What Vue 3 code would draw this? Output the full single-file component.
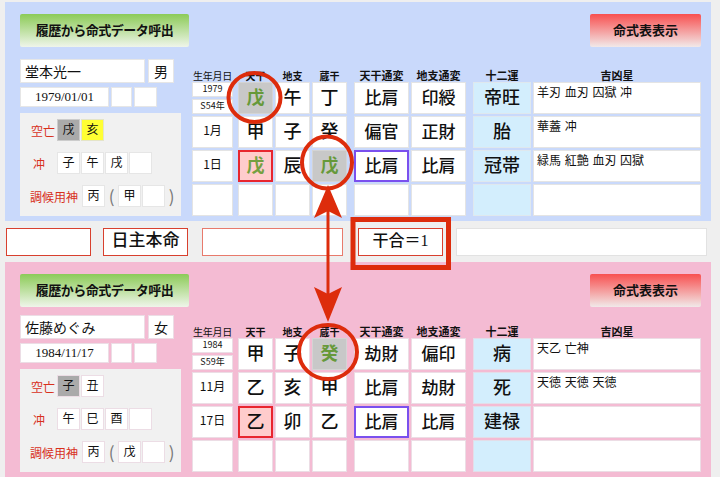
<script setup>
// cell helper: text plus optional highlight class
const c = (t, cls = '') => ({ t, cls })
const blank = c('')

const charts = [
  {
    theme: 'blue',
    name: '堂本光一',
    sex: '男',
    birth: '1979/01/01',
    kubo: [c('戌', 'grey'), c('亥', 'yellow')],
    chu: ['子', '午', '戌', ''],
    choko: ['丙', '甲', ''],
    year: '1979',
    era: 'S54年',
    month: '1月',
    day: '1日',
    stems: [
      { title: '天干', cells: [c('戊', 'hit'), c('甲'), c('戊', 'day green'), blank] },
      { title: '地支', cells: [c('午'), c('子'), c('辰'), blank] },
      { title: '蔵干', cells: [c('丁'), c('癸'), c('戊', 'hit'), blank] }
    ],
    tsuhen: [
      { title: '天干通変', cells: [c('比肩'), c('偏官'), c('比肩', 'purple'), blank] },
      { title: '地支通変', cells: [c('印綬'), c('正財'), c('比肩'), blank] }
    ],
    unsei: ['帝旺', '胎', '冠帯', ''],
    stars: ['羊刃 血刃 囚獄 冲', '華蓋 冲', '緑馬 紅艶 血刃 囚獄', '']
  },
  {
    theme: 'pink',
    name: '佐藤めぐみ',
    sex: '女',
    birth: '1984/11/17',
    kubo: [c('子', 'grey'), c('丑')],
    chu: ['午', '巳', '酉', ''],
    choko: ['丙', '戊', ''],
    year: '1984',
    era: 'S59年',
    month: '11月',
    day: '17日',
    stems: [
      { title: '天干', cells: [c('甲'), c('乙'), c('乙', 'day'), blank] },
      { title: '地支', cells: [c('子'), c('亥'), c('卯'), blank] },
      { title: '蔵干', cells: [c('癸', 'hit'), c('甲'), c('乙'), blank] }
    ],
    tsuhen: [
      { title: '天干通変', cells: [c('劫財'), c('比肩'), c('比肩', 'purple'), blank] },
      { title: '地支通変', cells: [c('偏印'), c('劫財'), c('比肩'), blank] }
    ],
    unsei: ['病', '死', '建禄', ''],
    stars: ['天乙 亡神', '天徳 天徳 天徳', '', '']
  }
]
</script>

<template>
  <div class="page">
    <template v-for="(chart, i) in charts" :key="chart.name">
      <section class="panel" :class="chart.theme">
        <div class="buttons">
          <div class="btn btn-green">履歴から命式データ呼出</div>
          <div class="btn btn-red">命式表表示</div>
        </div>

        <div class="body">
          <div class="left">
            <div class="line name-line">
              <div class="box name">{{ chart.name }}</div>
              <div class="box sex">{{ chart.sex }}</div>
            </div>
            <div class="line date-line">
              <div class="box birth">{{ chart.birth }}</div>
              <div class="box w21"></div>
              <div class="box w23"></div>
            </div>
            <div class="sub">
              <div class="sub-row">
                <span class="label">空亡</span>
                <span v-for="k in chart.kubo" :key="k.t" class="mini" :class="k.cls">{{ k.t }}</span>
              </div>
              <div class="sub-row">
                <span class="label single">冲</span>
                <span v-for="(k, n) in chart.chu" :key="n" class="mini">{{ k }}</span>
              </div>
              <div class="sub-row">
                <span class="label long">調候用神</span>
                <span class="mini">{{ chart.choko[0] }}</span>
                <span class="paren">(</span>
                <span class="mini">{{ chart.choko[1] }}</span>
                <span class="mini">{{ chart.choko[2] }}</span>
                <span class="paren">)</span>
              </div>
            </div>
          </div>

          <div class="table">
            <div class="col w-date">
              <div class="head date-head">生年月日</div>
              <div class="split">
                <div class="cell small">{{ chart.year }}</div>
                <div class="cell small">{{ chart.era }}</div>
              </div>
              <div class="cell date-cell">{{ chart.month }}</div>
              <div class="cell date-cell">{{ chart.day }}</div>
              <div class="cell"></div>
            </div>

            <div class="group">
              <div v-for="col in chart.stems" :key="col.title" class="col w-stem">
                <div class="head">{{ col.title }}</div>
                <div v-for="(cell, n) in col.cells" :key="n" class="cell big" :class="cell.cls">{{ cell.t }}</div>
              </div>
            </div>

            <div class="group">
              <div v-for="col in chart.tsuhen" :key="col.title" class="col w-tsuhen">
                <div class="head">{{ col.title }}</div>
                <div v-for="(cell, n) in col.cells" :key="n" class="cell big" :class="cell.cls">{{ cell.t }}</div>
              </div>
            </div>

            <div class="group tight">
              <div class="col w-unsei">
                <div class="head">十二運</div>
                <div v-for="(u, n) in chart.unsei" :key="n" class="cell big sky">{{ u }}</div>
              </div>
              <div class="col w-stars">
                <div class="head">吉凶星</div>
                <div v-for="(s, n) in chart.stars" :key="n" class="cell star">{{ s }}</div>
              </div>
            </div>
          </div>
        </div>
      </section>

      <div v-if="i === 0" class="result">
        <div class="res r1"></div>
        <div class="res r2">日主本命</div>
        <div class="res r3"></div>
        <div class="res r4">干合＝1</div>
        <div class="res r5"></div>
      </div>
    </template>

    <!-- annotations drawn over the chart -->
    <svg class="marks" width="720" height="477" viewBox="0 0 720 477">
      <g fill="none" stroke="#dd2c0c">
        <ellipse cx="254.5" cy="97.5" rx="26" ry="24.5" stroke-width="4" />
        <ellipse cx="327" cy="162.5" rx="25" ry="26" stroke-width="4" />
        <ellipse cx="328" cy="352" rx="29" ry="27" stroke-width="4" />
        <rect x="353" y="219.5" width="95.5" height="48" stroke-width="5" />
        <path d="M328 205V300" stroke-width="3" />
      </g>
      <g fill="#dd2c0c">
        <path d="M328 185L342 218L328 211L314 218Z" />
        <path d="M328 322L342 287L328 294L314 287Z" />
      </g>
    </svg>
  </div>
</template>

<style scoped>
.page {
  position: relative;
  width: 720px;
  height: 477px;
  padding-top: 2px;
  box-sizing: border-box;
  overflow: hidden;
  background: #efefef;
  font-family: "Noto Sans CJK JP", "Noto Sans", sans-serif;
  color: #111;
}

.panel {
  width: 706px;
  margin-left: 5px;
  padding: 12px 10px 5px 15px;
  box-sizing: border-box;
}
.blue { background: #c9d9fb; }
.pink { background: #f4bbd3; }

.buttons {
  display: flex;
  justify-content: space-between;
}
.btn {
  height: 33px;
  line-height: 31px;
  text-align: center;
  font-size: 13px;
  font-weight: 700;
  border-radius: 2px;
}
.btn-green {
  width: 169px;
  background: linear-gradient(#8ccb58, #eff5ea);
  letter-spacing: -0.5px;
}
.btn-red {
  width: 111px;
  background: linear-gradient(#f85050, #f1e9e9);
}

.body {
  display: flex;
  margin-top: 12px;
}
.pink .body { margin-top: 8px; }

.left {
  width: 161px;
  display: flex;
  flex-direction: column;
}
.line {
  display: flex;
}
.box {
  background: #fff;
  border: 1px solid #e6e6e6;
  box-sizing: border-box;
}
.name-line { height: 24px; gap: 3px; }
.name {
  width: 125px;
  padding-left: 4px;
  font-size: 14px;
  line-height: 22px;
}
.sex {
  width: 26px;
  text-align: center;
  font-size: 14px;
  line-height: 22px;
}
.date-line { height: 20px; margin-top: 4px; gap: 2px; }
.birth {
  width: 89px;
  text-align: center;
  font-family: "Liberation Serif", serif;
  font-size: 13px;
  line-height: 18px;
}
.w21 { width: 21px; }
.w23 { width: 23px; }

.sub {
  flex: 1;
  margin-top: 6px;
  padding: 6px 0 0 10px;
  background: #f1f1f1;
  display: flex;
  flex-direction: column;
  gap: 11px;
}
.sub-row {
  display: flex;
  height: 22px;
  gap: 1px;
  align-items: center;
}
.label {
  width: 26px;
  text-align: center;
  font-size: 12px;
  color: #d8301c;
}
.label.single {
  padding-right: 8px;
  box-sizing: border-box;
}
.label.long {
  width: 51px;
  text-align: left;
}
.mini {
  width: 23px;
  height: 22px;
  background: #fff;
  border: 1px solid #e6e6e6;
  box-sizing: border-box;
  text-align: center;
  font-size: 12px;
  line-height: 18px;
}
.mini.grey { background: #aaa; border-color: #ccc; }
.mini.yellow { background: #ffff33; border-color: #e4e4c8; }
.paren {
  width: 11px;
  text-align: center;
  font-size: 17px;
  line-height: 20px;
  color: #777;
}

.table {
  display: flex;
  margin: 11px 0 0 11px;
  gap: 7px;
}
.table > .col { margin-right: -2px; }
.group {
  display: flex;
  gap: 2px;
}
.col {
  display: flex;
  flex-direction: column;
  gap: 2px;
}
.w-date { width: 41px; }
.w-stem { width: 35px; }
.w-tsuhen { width: 55px; }
.w-unsei { width: 58px; }
.w-stars { width: 168px; }

.head {
  height: 12px;
  margin-bottom: -2px;
  text-align: center;
  white-space: nowrap;
  font-size: 10px;
  font-weight: 700;
  line-height: 11px;
}
.w-tsuhen .head,
.w-unsei .head,
.w-stars .head { font-size: 11px; }
.date-head {
  font-weight: 400;
  letter-spacing: -0.3px;
}

.cell {
  height: 32px;
  flex: none;
  background: #fff;
  border: 1px solid #e4e4e4;
  box-sizing: border-box;
  text-align: center;
}
.pink .cell,
.pink .box,
.pink .mini { border-color: #ecdde5; }
.split {
  height: 32px;
  display: flex;
  flex-direction: column;
  gap: 2px;
}
.small {
  height: 15px;
  font-size: 9px;
  line-height: 12px;
}
.date-cell {
  font-size: 12px;
  line-height: 26px;
}
.big {
  font-size: 17px;
  font-weight: 500;
  line-height: 27px;
}
.w-stem .big { font-size: 18px; }
.w-unsei .big { font-size: 18px; }
.star {
  padding: 1px 0 0 3px;
  text-align: left;
  font-size: 12px;
  line-height: 16px;
  word-spacing: 1px;
}
.sky { background: #d3eefd; border-color: #dfe8ee; }
.pink .sky { background: #d3eefd; border-color: #e3dde8; }
.hit {
  background: #c8c8c8;
  color: #66993a;
  font-weight: 700;
  border-color: #d4d4d4;
}
.pink .hit { border-color: #d4d4d4; }
.day,
.pink .day {
  background: #ffcccc;
  border: 2px solid #e8262f;
  line-height: 25px;
}
.day.green {
  color: #75a040;
  font-weight: 700;
}
.purple,
.pink .purple {
  border: 2px solid #7a50ee;
  line-height: 25px;
}

.result {
  height: 41px;
  padding-left: 6px;
  display: flex;
  align-items: center;
  box-sizing: border-box;
}
.res {
  height: 28px;
  background: #fff;
  border: 1px solid #d8402e;
  box-sizing: border-box;
  text-align: center;
  font-family: "Liberation Serif", "Noto Sans CJK JP", serif;
  font-size: 16px;
  font-weight: 500;
  line-height: 24px;
}
.r1 { width: 85px; }
.r2 { width: 85px; margin-left: 12px; font-size: 17px; }
.r3 { width: 141px; margin-left: 14px; border-color: #e87a6c; }
.r4 { width: 85px; margin-left: 15px; }
.r5 { width: 251px; margin-left: 13px; border-color: #e2e2e2; }

.marks {
  position: absolute;
  left: 0;
  top: 0;
}
</style>
